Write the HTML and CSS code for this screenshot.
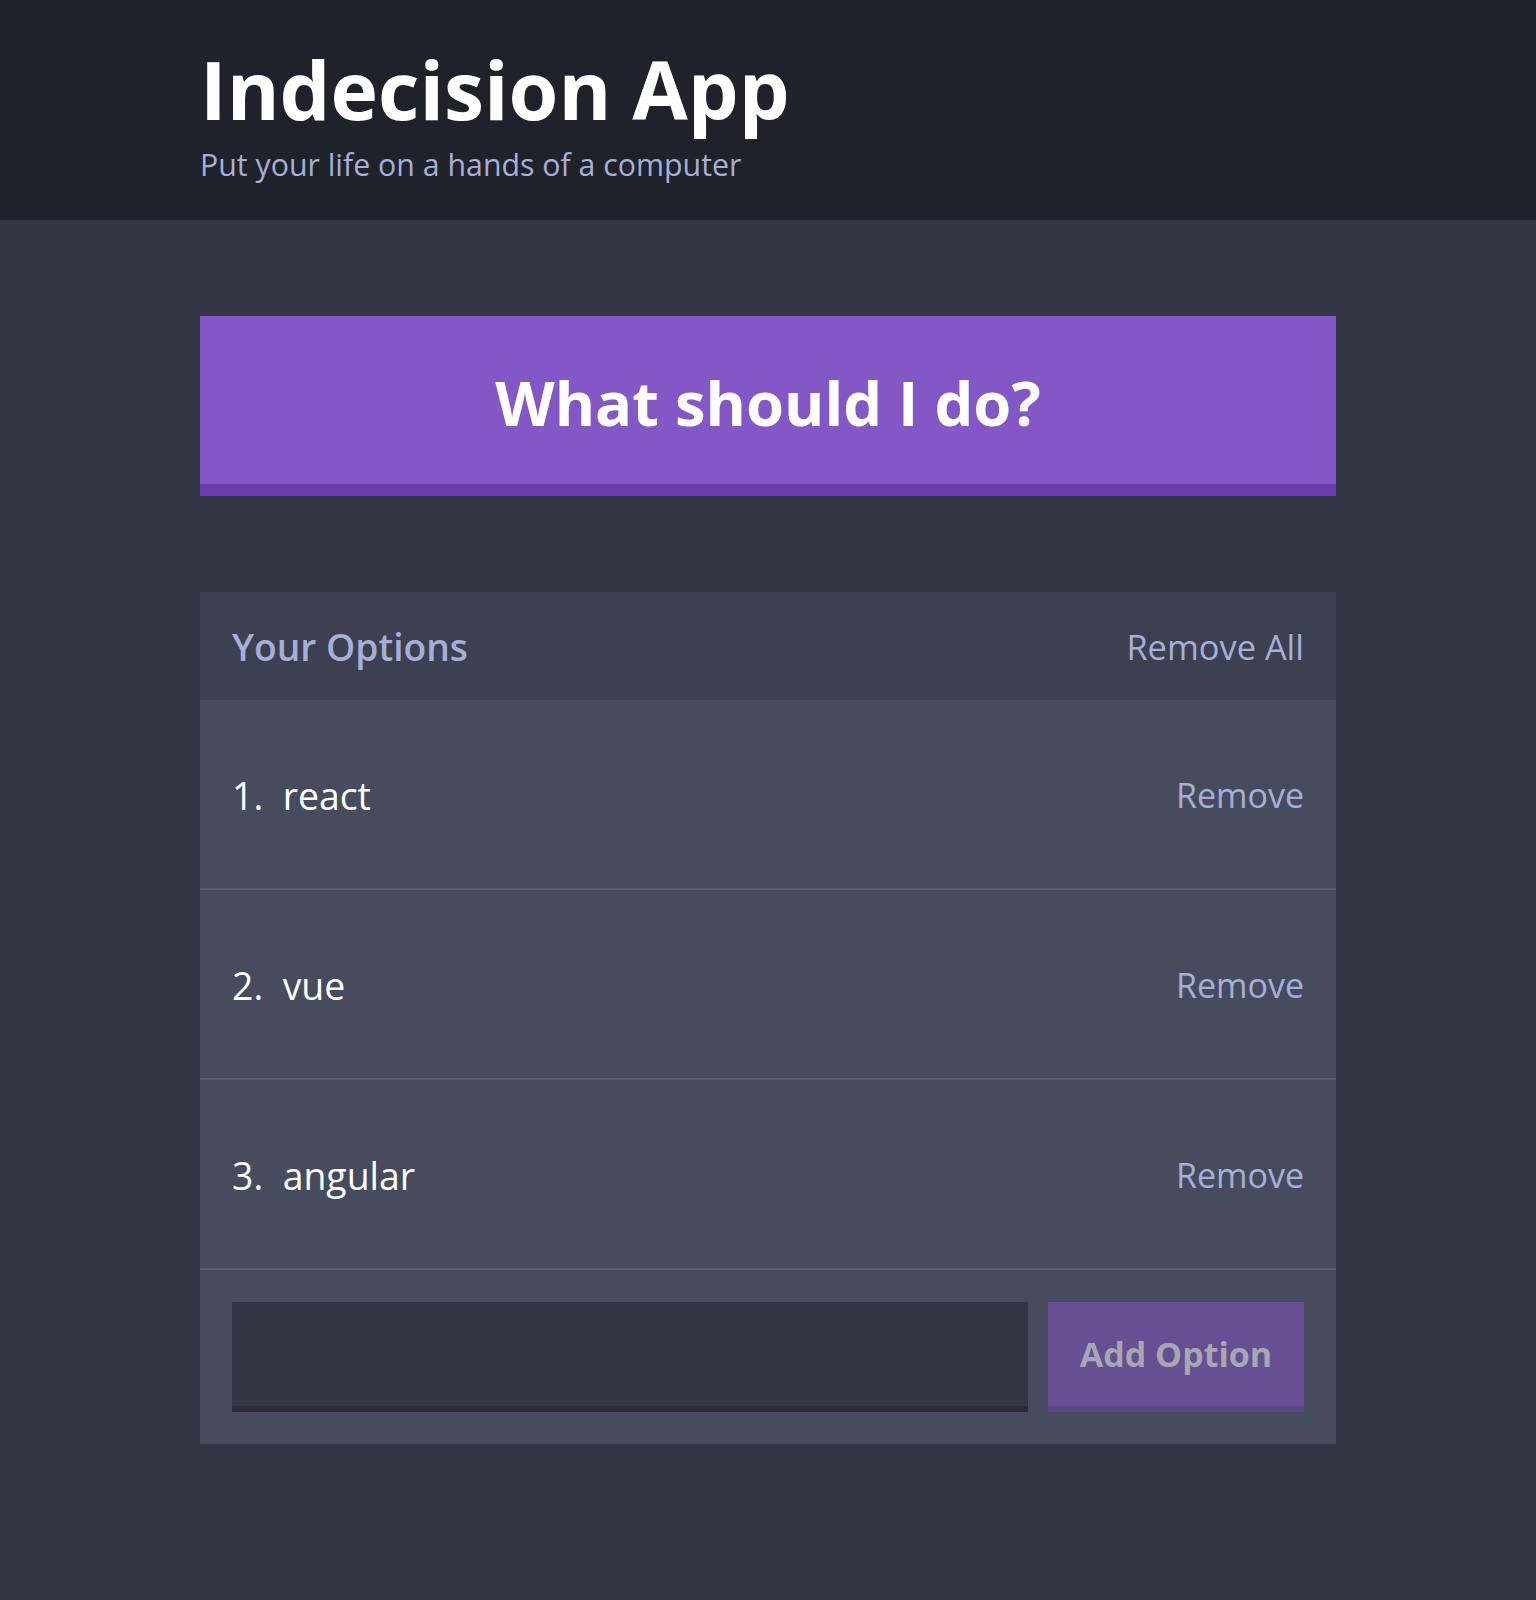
FILE: index.html
```html
<!DOCTYPE html>
<html lang="en">
<head>
<meta charset="utf-8">
<title>Indecision App</title>
<link rel="stylesheet" href="styles.css">
</head>
<body>
<header class="header">
  <div class="container">
    <h1 class="header__title">Indecision App</h1>
    <h2 class="header__subtitle">Put your life on a hands of a computer</h2>
  </div>
</header>
<main class="container main">
  <button class="big-button">What should I do?</button>
  <section class="widget">
    <div class="widget-header">
      <h3 class="widget-header__title">Your Options</h3>
      <button class="button--link button--link-all">Remove All</button>
    </div>
    <div class="option">
      <p class="option__text">1.&nbsp; react</p>
      <button class="button--link">Remove</button>
    </div>
    <div class="option">
      <p class="option__text">2.&nbsp; vue</p>
      <button class="button--link">Remove</button>
    </div>
    <div class="option">
      <p class="option__text">3.&nbsp; angular</p>
      <button class="button--link">Remove</button>
    </div>
    <form class="add-option">
      <input class="add-option__input" type="text" name="option">
      <button class="button" type="button">Add Option</button>
    </form>
  </section>
</main>
</body>
</html>
```

FILE: styles.css
```css
* { box-sizing: border-box; }
html, body { margin: 0; padding: 0; }
body {
  background: #333745;
  font-family: "Open Sans", "Noto Sans", sans-serif;
  color: #ffffff;
  min-height: 1600px;
}
.container {
  max-width: 1136px;
  margin: 0 auto;
}
.header {
  background: #20222b;
  height: 220px;
  padding-top: 49px;
}
.header__title {
  margin: 0;
  font-size: 80.5px;
  font-weight: 700;
  line-height: 1;
  color: #ffffff;
}
.header__subtitle {
  margin: 20px 0 0;
  font-size: 30.3px;
  font-weight: 400;
  line-height: 1;
  color: #a5afd7;
}
.main {
  padding-top: 96px;
  display: flex;
  flex-direction: column;
  gap: 96px;
}
.big-button {
  display: block;
  width: 100%;
  height: 180px;
  margin: 0;
  border: none;
  border-bottom: 12px solid #6a3dab;
  background: #8357c5;
  color: #ffffff;
  font-family: inherit;
  font-size: 61.5px;
  font-weight: 700;
  padding: 4px 0 0;
  cursor: pointer;
}
.widget {
  background: #464b5e;
}
.widget-header {
  background: #3c4051;
  height: 108px;
  padding: 0 32px;
  display: flex;
  align-items: center;
  justify-content: space-between;
}
.widget-header__title {
  margin: 0;
  font-size: 37.2px;
  font-weight: 600;
  color: #a5afd7;
}
.button--link {
  background: none;
  border: none;
  padding: 0;
  font-family: inherit;
  font-size: 34px;
  font-weight: 400;
  color: #a5afd7;
  cursor: pointer;
}
.button--link-all {
  font-size: 34.4px;
}
.option {
  height: 190px;
  padding: 2px 32px 0;
  border-bottom: 2px solid #575c75;
  display: flex;
  align-items: center;
  justify-content: space-between;
}
.option__text {
  margin: 0;
  font-size: 37.4px;
  color: #ffffff;
}
.add-option {
  display: flex;
  gap: 20px;
  padding: 32px;
}
.add-option__input {
  flex: 1;
  height: 110px;
  background: #333645;
  border: none;
  border-bottom: 6px solid #292b36;
  color: #a5afd7;
  font-family: inherit;
  font-size: 34px;
  padding: 0 16px;
  outline: none;
}
.button {
  width: 256px;
  height: 110px;
  background: #664f92;
  border: none;
  border-bottom: 6px solid #5b4689;
  color: #a5a7b1;
  font-family: inherit;
  font-size: 34px;
  font-weight: 700;
  padding: 0;
}
```
